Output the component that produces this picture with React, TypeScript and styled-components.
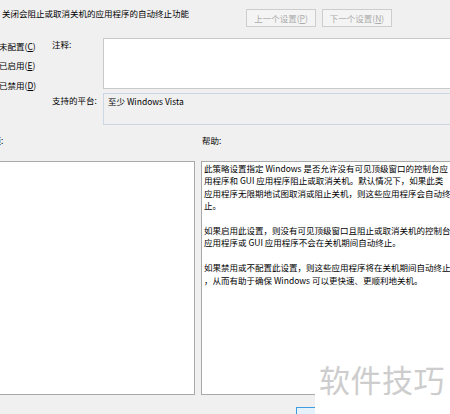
import React from 'react';
import styled, { createGlobalStyle } from 'styled-components';

const GlobalStyle = createGlobalStyle`
    html, body {
        margin: 0;
        padding: 0;
        background: #f0f0f0;
    }
    body {
        font-family: "Noto Sans CJK SC", "Noto Sans", sans-serif;
        color: #000;
    }
`;

const Page = styled.div`
    position: relative;
    width: 450px;
    height: 414px;
    overflow: hidden;
    background: #f0f0f0;
`;

const Dialog = styled.div`
    margin-left: -18px;
    width: 488px;
    font-size: 8.5px;
    line-height: 12px;
`;

const Header = styled.div`
    display: flex;
    align-items: flex-start;
    height: 38px;
`;

const Title = styled.div`
    flex: 1;
    padding: 7px 0 0 20px;
    white-space: nowrap;
`;

const NavButtons = styled.div`
    display: flex;
    gap: 6px;
    margin: 9px 78px 0 0;
`;

const NavButton = styled.button`
    width: 70px;
    height: 18px;
    padding: 0;
    border: 1px solid #cdcdcd;
    background: #f4f4f4;
    color: #ababab;
    font-family: inherit;
    font-size: 8.5px;
    line-height: 12px;
`;

const Key = styled.span`
    text-decoration: underline;
`;

const Settings = styled.div`
    display: grid;
    grid-template-columns: 70px 51px 1fr;
    grid-template-rows: 51px 32px;
    row-gap: 4px;
`;

const RadioGroup = styled.div`
    grid-row: 1 / span 2;
    display: flex;
    flex-direction: column;
    margin-top: -2px;
`;

const RadioRow = styled.label`
    display: flex;
    align-items: center;
    gap: 4px;
    height: 19.5px;
    white-space: nowrap;
`;

const RadioDot = styled.span`
    box-sizing: border-box;
    width: 12px;
    height: 12px;
    margin-left: 1px;
    border: 1px solid #8f8f8f;
    border-radius: 50%;
    background: #fff;
`;

const FieldLabel = styled.div<{ $top: number }>`
    padding-top: ${p => p.$top}px;
    white-space: nowrap;
`;

const CommentBox = styled.div`
    box-sizing: border-box;
    border: 1px solid #c9c9c9;
    background: #fff;
`;

const PlatformBox = styled.div`
    box-sizing: border-box;
    border: 1px solid #cbd7e3;
    background: #f0f0f0;
    padding: 1px 0 0 4px;
    white-space: nowrap;
`;

const SectionLabels = styled.div`
    display: grid;
    grid-template-columns: 219px 1fr;
    height: 36px;
    box-sizing: border-box;
    padding-top: 9px;
`;

const SectionLabel = styled.div<{ $indent: number }>`
    padding-left: ${p => p.$indent}px;
    white-space: nowrap;
`;

const Panels = styled.div`
    display: grid;
    grid-template-columns: 213px 1fr;
    column-gap: 6px;
    height: 234px;
`;

const Panel = styled.div`
    box-sizing: border-box;
    border: 1px solid #a9a9a9;
    background: #fff;
`;

const HelpText = styled.div`
    padding: 0 0 0 2px;
    line-height: 12.4px;
`;

const HelpLine = styled.div`
    white-space: nowrap;
    min-height: 12.4px;
`;

const Footer = styled.div`
    display: flex;
    height: 19px;
    padding-left: 314px;
`;

// default button of the dialog, only its top-left corner shows in the shot
const OkButton = styled.button`
    margin-top: 12px;
    width: 75px;
    height: 23px;
    border: 1px solid #3c9ee0;
    background: #e5f1fb;
`;

const Watermark = styled.div`
    position: absolute;
    left: 315px;
    top: 360px;
    right: 0;
    bottom: 0;
    background: #fff;
    color: #cdcdcd;
    font-size: 31px;
    line-height: 31px;
    padding: 3px 0 0 4px;
    letter-spacing: 0.5px;
    white-space: nowrap;
`;

const helpLines = [
    '此策略设置指定 Windows 是否允许没有可见顶级窗口的控制台应',
    '用程序和 GUI 应用程序阻止或取消关机。默认情况下，如果此类',
    '应用程序无限期地试图取消或阻止关机，则这些应用程序会自动终',
    '止。',
    '',
    '如果启用此设置，则没有可见顶级窗口且阻止或取消关机的控制台',
    '应用程序或 GUI 应用程序不会在关机期间自动终止。',
    '',
    '如果禁用或不配置此设置，则这些应用程序将在关机期间自动终止',
    '，从而有助于确保 Windows 可以更快速、更顺利地关机。',
];

const radios = [
    { text: '未配置', key: 'C' },
    { text: '已启用', key: 'E' },
    { text: '已禁用', key: 'D' },
];

const App: React.FC = () => {
    return (
        <Page>
            <GlobalStyle />
            <Dialog>
                <Header>
                    <Title>关闭会阻止或取消关机的应用程序的自动终止功能</Title>
                    <NavButtons>
                        <NavButton disabled>上一个设置(<Key>P</Key>)</NavButton>
                        <NavButton disabled>下一个设置(<Key>N</Key>)</NavButton>
                    </NavButtons>
                </Header>

                <Settings>
                    <RadioGroup>
                        {radios.map(r => (
                            <RadioRow key={r.key}>
                                <RadioDot />
                                <span>
                                    {r.text}(<Key>{r.key}</Key>)
                                </span>
                            </RadioRow>
                        ))}
                    </RadioGroup>
                    <FieldLabel $top={0}>注释:</FieldLabel>
                    <CommentBox />
                    <FieldLabel $top={1}>支持的平台:</FieldLabel>
                    <PlatformBox>至少 Windows Vista</PlatformBox>
                </Settings>

                <SectionLabels>
                    <SectionLabel $indent={2}>选项:</SectionLabel>
                    <SectionLabel $indent={1}>帮助:</SectionLabel>
                </SectionLabels>

                <Panels>
                    <Panel />
                    <Panel>
                        <HelpText>
                            {helpLines.map((line, i) => (
                                <HelpLine key={i}>{line}</HelpLine>
                            ))}
                        </HelpText>
                    </Panel>
                </Panels>

                <Footer>
                    <OkButton aria-label="确定" />
                </Footer>
            </Dialog>
            <Watermark>软件技巧</Watermark>
        </Page>
    );
};

export default App;
